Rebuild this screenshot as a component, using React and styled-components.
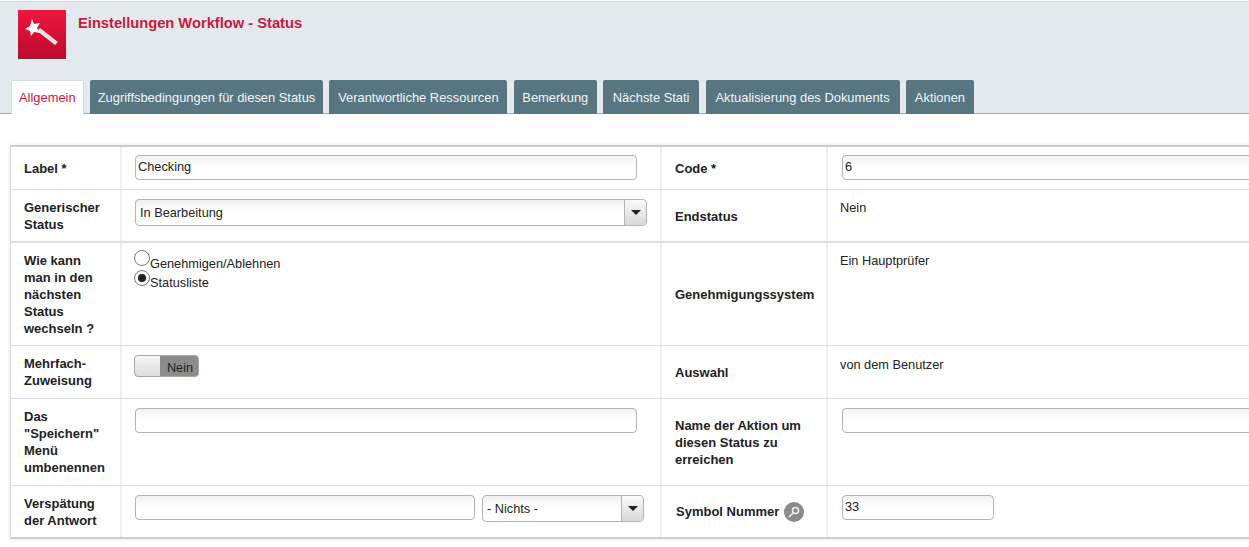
import React from "react";
import styled, { createGlobalStyle } from "styled-components";

const GlobalStyle = createGlobalStyle`
html, body {
  margin: 0;
  padding: 0;
  background: #fff;
  overflow: hidden;
}
body {
  font-family: "Liberation Sans", Arial, sans-serif;
  font-size: 12.75px;
  color: #222;
}
`;

const Page = styled.div`
width: 1249px;
height: 547px;
overflow: hidden;
`;

const Header = styled.div`
height: 111px;
margin-top: 1px;
border-top: 1px solid #cfd4d6;
border-bottom: 1px solid #9aa8ae;
background: #e4e9ed;
padding-left: 11px;
display: flex;
flex-direction: column;
justify-content: space-between;
`;

const TitleRow = styled.div`
display: flex;
align-items: flex-start;
padding: 8px 0 0 7px;
gap: 12px;
`;

const Logo = styled.div`
width: 48px;
height: 47px;
background: linear-gradient(#f0163f, #bd0a2e);
border-bottom: 2px solid #7c2a3a;
`;

const Title = styled.h1`
margin: 5px 0 0;
font-size: 14.7px;
font-weight: bold;
color: #c8193f;
`;

const Tabs = styled.div`
display: flex;
gap: 6.4px;
margin-bottom: -1px;
`;

const Tab = styled.div`
width: ${(p) => p.$width}px;
height: 34px;
box-sizing: border-box;
padding-top: ${(p) => (p.$active ? "9px" : "10px")};
font-size: 12.9px;
text-align: center;
border-radius: 2px 2px 0 0;
white-space: nowrap;
color: ${(p) => (p.$active ? "#c8193f" : "#f2f5f6")};
background: ${(p) => (p.$active ? "#fff" : "#587582")};
border: ${(p) => (p.$active ? "1px solid #d6dcdf" : "0")};
border-bottom: 0;
`;

const Form = styled.div`
width: 1300px;
margin: 31px 0 0 10px;
border: 1px solid #dcdcdc;
border-top: 2px solid #cdcdcd;
border-bottom: 2px solid #cdcdcd;
box-shadow: 0 0 3px #ddd;
`;

const Row = styled.div`
display: grid;
grid-template-columns: 111px 540px 166px 1fr;
height: ${(p) => p.$height}px;
box-sizing: border-box;
border-bottom: ${(p) => (p.$last ? "0" : p.$thick ? "2px solid #dedede" : "1px solid #dedede")};
`;

const Label = styled.div`
box-sizing: border-box;
padding: ${(p) => p.$pad || "0 12px 0 13px"};
display: flex;
align-items: center;
gap: 5px;
font-size: 13px;
font-weight: bold;
line-height: 17px;
color: #222;
border-right: 2px solid #eeeeee;
`;

const Field = styled.div`
box-sizing: border-box;
padding: ${(p) => p.$pad || "9px 0 0 13px"};
border-right: 2px solid #eeeeee;
display: flex;
align-items: flex-start;
gap: 7px;
`;

const Input = styled.input`
box-sizing: border-box;
width: ${(p) => p.$width}px;
height: 25px;
border: 1px solid #b4b4b4;
border-radius: 4px;
padding: 0 2px 3px;
font: 12.75px "Liberation Sans", Arial, sans-serif;
color: #222;
background: linear-gradient(#f1f1f1, #fff 45%);
outline: none;
`;

const Select = styled.div`
box-sizing: border-box;
width: ${(p) => p.$width}px;
height: 27px;
border: 1px solid #b4b4b4;
border-radius: 4px;
display: flex;
background: linear-gradient(#efefef, #fff 45%);
`;

const SelectValue = styled.div`
flex: 1;
padding: 5px 4px;
font-size: 12.75px;
`;

const SelectButton = styled.div`
width: 21px;
border-left: 1px solid #b4b4b4;
border-radius: 0 4px 4px 0;
background: linear-gradient(#fafafa, #d8d8d8);
display: flex;
align-items: center;
justify-content: center;
&::after {
  content: "";
  border: 5px solid transparent;
  border-top: 5px solid #222;
  border-bottom: 0;
}
`;

const Radios = styled.div`
display: flex;
flex-direction: column;
`;

const RadioRow = styled.div`
display: flex;
align-items: flex-start;
height: 20px;
font-size: 12.75px;
line-height: 14px;
`;

const RadioText = styled.span`
margin-top: ${(p) => p.$top}px;
`;

const RadioDot = styled.span`
width: 16px;
height: 16px;
box-sizing: border-box;
border: 1px solid #777;
border-radius: 50%;
background: #fff;
display: flex;
align-items: center;
justify-content: center;
&::after {
  content: "";
  display: ${(p) => (p.$checked ? "block" : "none")};
  width: 8px;
  height: 8px;
  border-radius: 50%;
  background: #222;
}
`;

const Toggle = styled.div`
box-sizing: border-box;
width: 65px;
height: 22px;
border: 1px solid #a8a8a8;
border-radius: 4px;
background: #8c8c8c;
display: flex;
overflow: hidden;
`;

const ToggleKnob = styled.div`
width: 25px;
background: linear-gradient(#f8f8f8, #dcdcdc);
`;

const ToggleText = styled.div`
flex: 1;
text-align: center;
padding: 4px 0 0 2px;
font-size: 12.75px;
color: #222;
`;

const Value = styled.div`
font-size: 12.75px;
padding: ${(p) => p.$pad || "0"};
`;

const SearchBadge = styled.span`
width: 20px;
height: 20px;
border-radius: 50%;
background: #8b8b8b;
display: inline-flex;
align-items: center;
justify-content: center;
flex: none;
`;

const App = () => {
  const tabs = [
    { label: "Allgemein", width: 72.6 },
    { label: "Zugriffsbedingungen für diesen Status", width: 233 },
    { label: "Verantwortliche Ressourcen", width: 178 },
    { label: "Bemerkung", width: 83 },
    { label: "Nächste Stati", width: 96 },
    { label: "Aktualisierung des Dokuments", width: 194 },
    { label: "Aktionen", width: 68 },
  ];

  return (
    <Page>
      <GlobalStyle />
      <Header>
        <TitleRow>
          <Logo>
            <svg width="48" height="47" viewBox="0 0 48 47">
              <path d="M19 21l3-3 18 14-3 3z" fill="#f6dde2" />
              <path d="M14 9l2 5 6-1-3 5 3 5-6-1-3 4-1-5-5-2 5-3z" fill="#fff" />
            </svg>
          </Logo>
          <Title>Einstellungen Workflow - Status</Title>
        </TitleRow>
        <Tabs>
          {tabs.map((tab, i) => (
            <Tab key={tab.label} $width={tab.width} $active={i === 0}>{tab.label}</Tab>
          ))}
        </Tabs>
      </Header>

      <Form>
        <Row $height={43}>
          <Label>Label *</Label>
          <Field $pad="8px 0 0 13px">
            <Input $width={502} defaultValue="Checking" />
          </Field>
          <Label>Code *</Label>
          <Field $pad="8px 0 0 14px">
            <Input $width={500} defaultValue="6" />
          </Field>
        </Row>
        <Row $height={53} $thick>
          <Label>Generischer Status</Label>
          <Field>
            <Select $width={512}>
              <SelectValue>In Bearbeitung</SelectValue>
              <SelectButton />
            </Select>
          </Field>
          <Label $pad="2px 12px 0 13px">Endstatus</Label>
          <Value $pad="10px 0 0 12px">Nein</Value>
        </Row>
        <Row $height={103}>
          <Label>Wie kann man in den nächsten Status wechseln ?</Label>
          <Field $pad="7px 0 0 12px">
            <Radios>
              <RadioRow><RadioDot /><RadioText $top={7}>Genehmigen/Ablehnen</RadioText></RadioRow>
              <RadioRow><RadioDot $checked /><RadioText $top={6}>Statusliste</RadioText></RadioRow>
            </Radios>
          </Field>
          <Label>Genehmigungssystem</Label>
          <Value $pad="10px 0 0 12px">Ein Hauptprüfer</Value>
        </Row>
        <Row $height={53}>
          <Label>Mehrfach-Zuweisung</Label>
          <Field $pad="9px 0 0 12px">
            <Toggle>
              <ToggleKnob />
              <ToggleText>Nein</ToggleText>
            </Toggle>
          </Field>
          <Label>Auswahl</Label>
          <Value $pad="11px 0 0 12px">von dem Benutzer</Value>
        </Row>
        <Row $height={87}>
          <Label>Das "Speichern" Menü umbenennen</Label>
          <Field>
            <Input $width={502} />
          </Field>
          <Label>Name der Aktion um diesen Status zu erreichen</Label>
          <Field $pad="9px 0 0 14px">
            <Input $width={500} />
          </Field>
        </Row>
        <Row $height={51} $last>
          <Label>Verspätung der Antwort</Label>
          <Field>
            <Input $width={340} />
            <Select $width={162}>
              <SelectValue>- Nichts -</SelectValue>
              <SelectButton />
            </Select>
          </Field>
          <Label $pad="0 12px 0 14px">
            Symbol Nummer
            <SearchBadge>
              <svg width="14" height="14" viewBox="0 0 14 14" fill="none" stroke="#eee" strokeWidth="1.6">
                <circle cx="8.5" cy="5.5" r="3" />
                <path d="M6.3 7.7L2 12" />
              </svg>
            </SearchBadge>
          </Label>
          <Field $pad="9px 0 0 14px">
            <Input $width={152} defaultValue="33" />
          </Field>
        </Row>
      </Form>
    </Page>
  );
};

export default App;
